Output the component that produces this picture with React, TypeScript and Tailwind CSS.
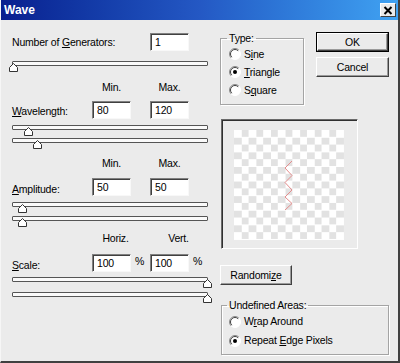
import React from "react";

function Field({ value }: { value: string }) {
  return (
    <div className="w-[39px] h-[18px] bg-white border border-t-[#808080] border-l-[#808080] border-r-[#f8f8f8] border-b-[#f8f8f8] shadow-[inset_1px_1px_0_#404040] flex items-center pl-[4px] pt-[1px]">
      {value}
    </div>
  );
}

function Slider({ pos }: { pos: number }) {
  return (
    <div className="relative w-[196px] h-[5px] border border-[#555] bg-[#fafafa] rounded-[1px]">
      <svg
        className="absolute top-[1px]"
        style={{ left: pos - 5 }}
        width="9"
        height="9"
        viewBox="0 0 9 9"
      >
        <path d="M4.5 0.5 L8.5 4.5 L8.5 8.5 L0.5 8.5 L0.5 4.5 Z" fill="#fff" stroke="#333" />
      </svg>
    </div>
  );
}

function Radio({ checked }: { checked?: boolean }) {
  return (
    <svg width="12" height="12" viewBox="0 0 12 12" className="shrink-0">
      <circle cx="6" cy="6" r="5.5" fill="#fff" />
      <path d="M9.9 2.1 A5.5 5.5 0 0 0 2.1 9.9" stroke="#8a8a8a" fill="none" />
      <path d="M9.2 2.8 A4.5 4.5 0 0 0 2.8 9.2" stroke="#404040" fill="none" />
      <path d="M2.1 9.9 A5.5 5.5 0 0 0 9.9 2.1" stroke="#fff" fill="none" />
      {checked && <circle cx="6" cy="6" r="2" fill="#000" />}
    </svg>
  );
}

function Btn({ children, def, w }: { children: React.ReactNode; def?: boolean; w: string }) {
  return (
    <div className={(def ? "border border-black " : "") + w + " h-[20px]"}>
      <div className="w-full h-full bg-[#ebebeb] border border-t-white border-l-white border-r-[#404040] border-b-[#404040] shadow-[inset_-1px_-1px_0_#9a9a9a] flex items-center justify-center">
        {children}
      </div>
    </div>
  );
}

export default function App() {
  return (
    <div className="w-[400px] h-[363px] bg-[#ebebeb] font-['Liberation_Sans',Arial,sans-serif] text-[10.5px] tracking-[-0.2px] leading-[13px] text-black flex flex-col border-l border-l-[#f6f6f6] border-r-2 border-r-[#404040] border-b-2 border-b-[#404040] overflow-hidden">
      {/* Title bar */}
      <div className="h-[20px] shrink-0 bg-linear-to-r from-[#0a1f8f] via-[#2458c4] to-[#40a2f2] flex items-center pl-[3px] pr-[2px]">
        <span className="text-white font-bold text-[12px] tracking-[0px] flex-1">Wave</span>
        <div className="w-[16px] h-[14px] bg-[#ebebeb] border border-t-white border-l-white border-r-[#404040] border-b-[#404040] flex items-center justify-center">
          <svg width="10" height="9" viewBox="0 0 10 9">
            <path d="M1.5 1 L8.5 8 M8.5 1 L1.5 8" stroke="#000" strokeWidth="2" />
          </svg>
        </div>
      </div>

      {/* Body */}
      <div className="flex flex-row flex-1">
        {/* Left column */}
        <div className="w-[219px] pl-[11px] flex flex-col">
          <div className="mt-[13px] h-[18px] flex items-center">
            <span className="w-[138px]">
              Number of <u>G</u>enerators:
            </span>
            <Field value="1" />
          </div>
          <div className="mt-[10px]">
            <Slider pos={1} />
          </div>

          <div className="mt-[15px] h-[13px] flex">
            <span className="w-[80px]" />
            <span className="w-[39px] text-center">Min.</span>
            <span className="w-[19px]" />
            <span className="w-[39px] text-center">Max.</span>
          </div>
          <div className="mt-[7px] h-[18px] flex items-center">
            <span className="w-[80px] pt-[2px]">
              <u>W</u>avelength:
            </span>
            <Field value="80" />
            <span className="w-[19px]" />
            <Field value="120" />
          </div>
          <div className="mt-[6px]">
            <Slider pos={16} />
          </div>
          <div className="mt-[8px]">
            <Slider pos={25} />
          </div>

          <div className="mt-[14px] h-[13px] flex">
            <span className="w-[80px]" />
            <span className="w-[39px] text-center">Min.</span>
            <span className="w-[19px]" />
            <span className="w-[39px] text-center">Max.</span>
          </div>
          <div className="mt-[8px] h-[18px] flex items-center">
            <span className="w-[80px] pt-[4px]">
              <u>A</u>mplitude:
            </span>
            <Field value="50" />
            <span className="w-[19px]" />
            <Field value="50" />
          </div>
          <div className="mt-[6px]">
            <Slider pos={10} />
          </div>
          <div className="mt-[9px]">
            <Slider pos={10} />
          </div>

          <div className="mt-[11px] h-[13px] flex">
            <span className="w-[84px]" />
            <span className="w-[39px] text-center">Horiz.</span>
            <span className="w-[24px]" />
            <span className="w-[39px] text-center">Vert.</span>
          </div>
          <div className="mt-[9px] h-[18px] flex items-center">
            <span className="w-[80px] pt-[4px]">
              <u>S</u>cale:
            </span>
            <Field value="100" />
            <span className="w-[19px] pl-[4px] pb-[3px]">%</span>
            <Field value="100" />
            <span className="pl-[4px] pb-[3px]">%</span>
          </div>
          <div className="mt-[5px]">
            <Slider pos={195} />
          </div>
          <div className="mt-[10px]">
            <Slider pos={195} />
          </div>
        </div>

        {/* Right column */}
        <div className="flex-1 flex flex-col">
          <div className="mt-[11px] flex items-start">
            <fieldset className="mt-[1px] w-[84px] h-[73px] border border-[#a4a4a4] shadow-[inset_1px_1px_0_#fff,1px_1px_0_#fff]">
              <legend className="ml-[6px] px-[2px] leading-[13px]">Type:</legend>
              <div className="h-[18px] flex items-center pl-[8px]">
                <Radio />
                <span className="ml-[3px]">
                  S<u>i</u>ne
                </span>
              </div>
              <div className="h-[18px] flex items-center pl-[8px]">
                <Radio checked />
                <span className="ml-[3px]">
                  <u>T</u>riangle
                </span>
              </div>
              <div className="h-[18px] flex items-center pl-[8px]">
                <Radio />
                <span className="ml-[3px]">
                  S<u>q</u>uare
                </span>
              </div>
            </fieldset>
            <div className="ml-[12px] flex flex-col">
              <div className="mt-[1px]">
                <Btn def w="w-[73px]">
                  OK
                </Btn>
              </div>
              <div className="mt-[5px]">
                <Btn w="w-[73px]">Cancel</Btn>
              </div>
            </div>
          </div>

          <div className="mt-[14px] ml-[1px] w-[137px] h-[130px] border border-t-[#6a6a6a] border-l-[#6a6a6a] border-r-white border-b-white shadow-[inset_1px_1px_0_#303030] pl-[12px] pt-[10px]">
            <div className="relative w-[110px] h-[110px] bg-[conic-gradient(#e2e2e2_25%,#ffffff_0_50%,#e2e2e2_0_75%,#ffffff_0)] bg-[length:14.6px_14.6px]">
              <svg className="absolute left-0 top-0" width="110" height="110" viewBox="0 0 110 110">
                <polyline
                  points="58,31 51,38 58,45.5 51,52.5 58,60 51,67 58,73.5 51,80"
                  fill="none"
                  stroke="#e58c8c"
                  strokeWidth="1"
                />
              </svg>
            </div>
          </div>

          <div className="mt-[16px]">
            <Btn w="w-[72px]">
              <span>
                Randomi<u>z</u>e
              </span>
            </Btn>
          </div>

          <fieldset className="mt-[14px] ml-[1px] w-[168px] h-[56px] border border-[#a4a4a4] shadow-[inset_1px_1px_0_#fff,1px_1px_0_#fff]">
            <legend className="ml-[5px] px-[2px] leading-[13px]">Undefined Areas:</legend>
            <div className="h-[19px] flex items-center pl-[7px]">
              <Radio />
              <span className="ml-[3px]">
                W<u>r</u>ap Around
              </span>
            </div>
            <div className="h-[19px] flex items-center pl-[7px]">
              <Radio checked />
              <span className="ml-[3px]">
                Repeat <u>E</u>dge Pixels
              </span>
            </div>
          </fieldset>
        </div>
      </div>
    </div>
  );
}
